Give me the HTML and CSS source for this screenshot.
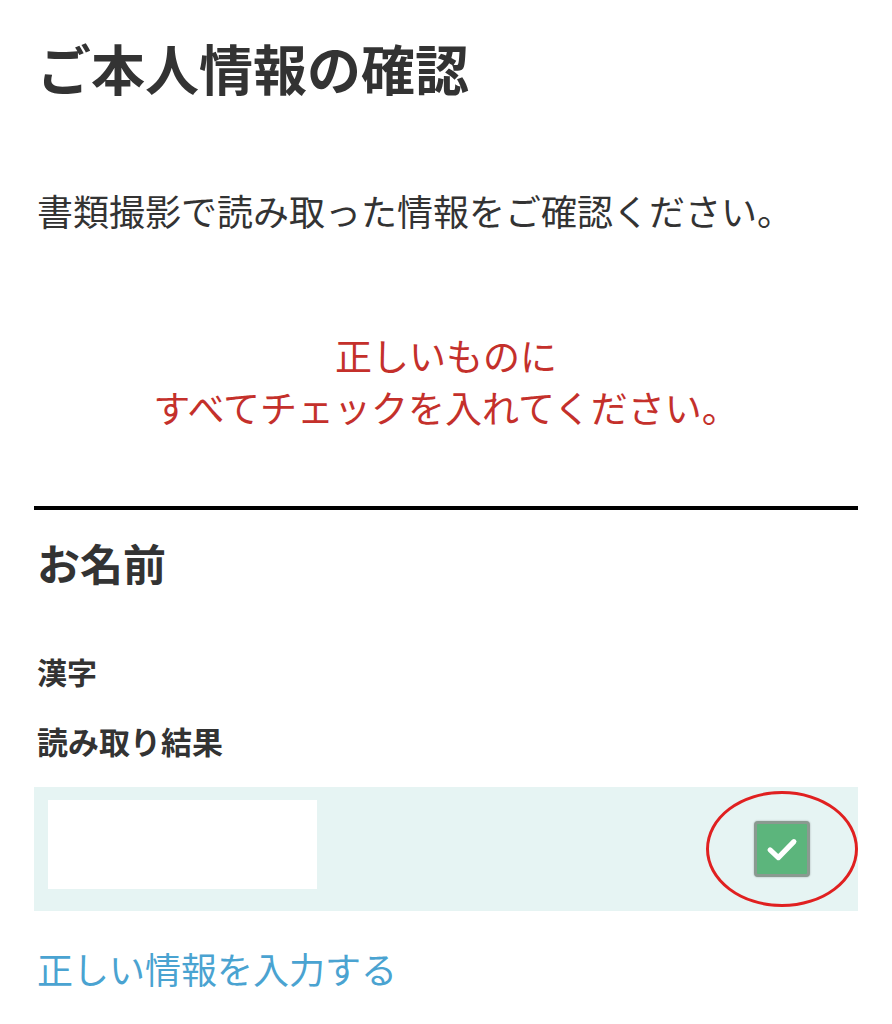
FILE: index.html
```html
<!DOCTYPE html>
<html lang="ja">
<head>
  <meta charset="UTF-8" />
  <meta name="viewport" content="width=device-width, initial-scale=1.0"/>
  <title>ご本人情報の確認</title>
  <link rel="stylesheet" href="styles.css">
</head>
<body>
  <main class="page">
    <h1 class="page-title">ご本人情報の確認</h1>
    <p class="lead">書類撮影で読み取った情報をご確認ください。</p>
    <p class="notice">正しいものに<br>すべてチェックを入れてください。</p>

    <section class="field-group">
      <h2 class="group-title">お名前</h2>
      <h3 class="field-label">漢字</h3>
      <h4 class="result-label">読み取り結果</h4>

      <div class="result-row">
        <div class="result-value"></div>
        <div class="check-wrap">
          <span class="check-box">
            <svg viewBox="0 0 24 24" width="44" height="44">
              <path d="M5.5 12.5l4.5 4.2L18.5 8" fill="none" stroke="#fff" stroke-width="2.8" stroke-linecap="round" stroke-linejoin="round"/>
            </svg>
          </span>
          <span class="check-ring"></span>
        </div>
      </div>

      <a class="edit-link" href="#">正しい情報を入力する</a>
    </section>
  </main>
</body>
</html>
```

FILE: styles.css
```css
* {
  margin: 0;
  padding: 0;
  box-sizing: border-box;
}

body {
  font-family: "Noto Sans CJK JP", "Noto Sans", sans-serif;
  background-color: #fff;
  color: #333;
}

.page {
  padding: 30px 34px 0;
}

.page-title {
  font-size: 54px;
  font-weight: 700;
  line-height: 1.4;
  padding-left: 3px;
}

.lead {
  font-size: 36px;
  line-height: 1.4;
  margin-top: 79px;
  padding-left: 3px;
}

.notice {
  margin-top: 94px;
  font-size: 37px;
  line-height: 52px;
  text-align: center;
  color: #c4302b;
}

.field-group {
  margin-top: 73px;
  border-top: 4px solid #000;
}

.group-title {
  font-size: 43px;
  font-weight: 700;
  line-height: 1.4;
  margin-top: 22px;
  padding-left: 3px;
}

.field-label {
  font-size: 30px;
  font-weight: 700;
  line-height: 1.4;
  margin-top: 58px;
  padding-left: 3px;
}

.result-label {
  font-size: 31px;
  font-weight: 700;
  line-height: 1.4;
  margin-top: 27px;
  padding-left: 3px;
}

.result-row {
  margin-top: 24px;
  background-color: #e6f4f3;
  height: 124px;
  padding: 13px 14px;
  display: flex;
  align-items: center;
  justify-content: space-between;
}

.result-value {
  width: 269px;
  height: 89px;
  background-color: #fff;
  align-self: flex-start;
}

.check-wrap {
  position: relative;
  width: 152px;
  height: 116px;
  display: flex;
  align-items: center;
  justify-content: center;
  margin-right: -14px;
}

.check-box {
  width: 56px;
  height: 56px;
  border-radius: 4px;
  background-color: #5cb57c;
  border: 3px solid #8a9a90;
  display: flex;
  align-items: center;
  justify-content: center;
  box-shadow: 0 0 2px rgba(0,0,0,0.3);
}

.check-ring {
  position: absolute;
  inset: 0;
  border: 3px solid #e02020;
  border-radius: 50%;
}

.edit-link {
  display: inline-block;
  margin-top: 32px;
  padding-left: 3px;
  font-size: 36px;
  line-height: 1.4;
  color: #4aa3d1;
  text-decoration: none;
}
```
